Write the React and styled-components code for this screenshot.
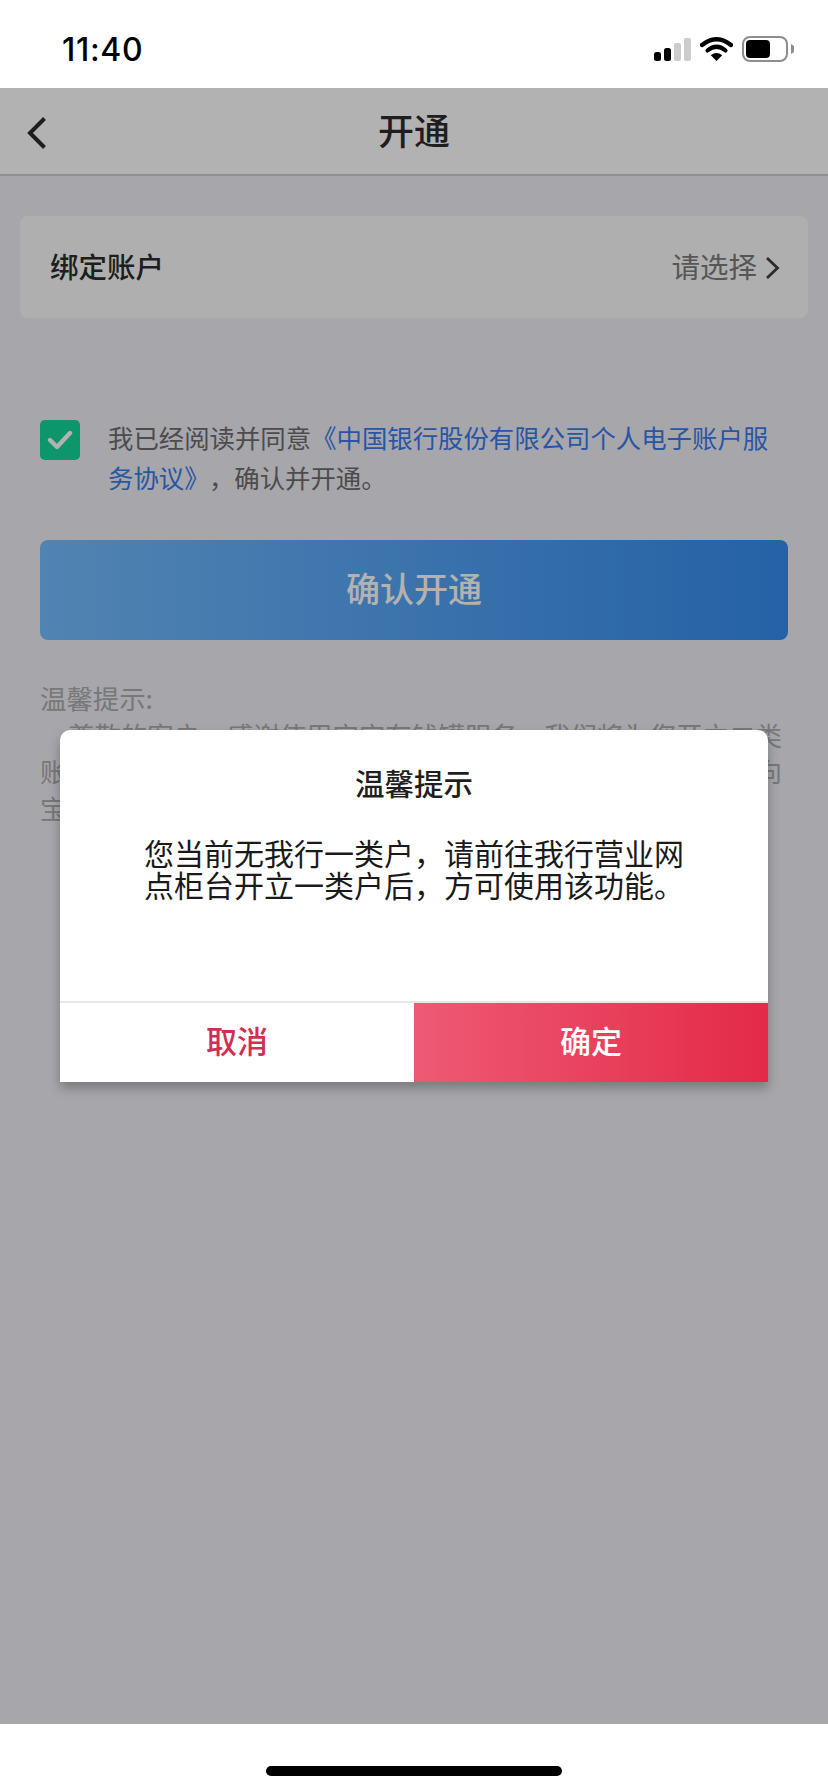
import styled, { createGlobalStyle } from 'styled-components';

const GlobalStyle = createGlobalStyle`
  html, body {
    margin: 0;
    padding: 0;
    background: #fff;
  }
  * {
    box-sizing: border-box;
  }
`;

const fontStack = `"Noto Sans CJK SC", "Noto Sans", sans-serif`;

const Page = styled.div`
  width: 828px;
  height: 1792px;
  display: flex;
  flex-direction: column;
  overflow: hidden;
  font-family: ${fontStack};
`;

const StatusBar = styled.div`
  height: 88px;
  flex: none;
  display: flex;
  align-items: center;
  justify-content: space-between;
  padding: 0 34px 0 62px;
  background: #fff;
`;

const Time = styled.div`
  font-family: Inter, Roboto, sans-serif;
  font-size: 32px;
  font-weight: 500;
  color: #000;
  letter-spacing: 0.7px;
  margin-top: 10px;
`;

const StatusIcons = styled.div`
  display: flex;
  align-items: center;
  gap: 9px;
  margin-top: 10px;
`;

const Main = styled.div`
  position: relative;
  flex: 1;
  background: #f0eef5;
`;

const NavBar = styled.div`
  height: 88px;
  display: flex;
  align-items: center;
  justify-content: center;
  padding-bottom: 4px;
  position: relative;
  background: #fff;
  border-bottom: 2px solid #cfcfcf;
`;

const BackIcon = styled.svg`
  position: absolute;
  left: 26px;
  top: 28px;
`;

const NavTitle = styled.h1`
  margin: 0;
  font-size: 36px;
  font-weight: 500;
  color: #2b2b2b;
  line-height: 1;
`;

const SelectCard = styled.div`
  height: 102px;
  margin: 40px 20px 0;
  padding: 0 28px 4px 30px;
  display: flex;
  align-items: center;
  justify-content: space-between;
  background: #fbfbfb;
  border-radius: 8px;
`;

const CardLabel = styled.span`
  font-size: 28.5px;
  font-weight: 500;
  color: #2b2b2b;
`;

const CardValue = styled.span`
  display: flex;
  align-items: center;
  gap: 8px;
  font-size: 28.5px;
  color: #7b7b7b;
`;

const CardChevron = styled.svg`
  margin-top: 5px;
`;

const AgreeRow = styled.div`
  display: flex;
  align-items: flex-start;
  gap: 28px;
  margin: 102px 40px 0;
`;

const CheckBox = styled.div`
  flex: none;
  width: 40px;
  height: 40px;
  display: flex;
  align-items: center;
  justify-content: center;
  background: #14d69a;
  border-radius: 5px;
`;

const AgreeText = styled.p`
  margin: -3px 0 0;
  font-size: 25.4px;
  line-height: 40px;
  color: #6d6d6f;
`;

const AgreeLink = styled.span`
  color: #3a7cec;
`;

const AgreeTail = styled.span`
  margin-left: 12px;
`;

const ConfirmButton = styled.button`
  display: block;
  width: 748px;
  height: 100px;
  margin: 43px 40px 0;
  padding: 0 0 5px;
  border: 0;
  border-radius: 8px;
  background: linear-gradient(90deg, #75bdff, #358cee);
  color: #fff;
  font-family: ${fontStack};
  font-size: 34px;
  font-weight: 500;
`;

const Tips = styled.div`
  margin: 40px 40px 0 40px;
  width: 742px;
  font-size: 26.4px;
  line-height: 36.6px;
  color: #a9acaf;
`;

const TipsBody = styled.p`
  margin: 0;
  text-indent: 28px;
  text-align: justify;
`;

const Backdrop = styled.div`
  position: absolute;
  inset: 0;
  display: flex;
  justify-content: center;
  align-items: flex-start;
  padding-top: 642px;
  background: rgba(0, 0, 0, 0.3);
`;

const Dialog = styled.div`
  width: 708px;
  height: 352px;
  display: flex;
  flex-direction: column;
  background: #fff;
  border-radius: 10px 10px 0 0;
  box-shadow: 0 6px 12px rgba(0, 0, 0, 0.28);
  overflow: hidden;
`;

const DialogTitle = styled.h2`
  margin: 32px 0 0;
  font-size: 29.5px;
  line-height: 40px;
  font-weight: 500;
  text-align: center;
  color: #1f1f1f;
`;

const DialogText = styled.p`
  flex: 1;
  margin: 34px 0 0;
  padding: 0 83px 0 84px;
  font-size: 30px;
  line-height: 32px;
  color: #1a1a1a;
`;

const DialogActions = styled.div`
  display: flex;
  height: 81px;
  flex: none;
  border-top: 2px solid #e8e8e8;
`;

const DialogButton = styled.button`
  flex: 1;
  border: 0;
  padding: 0 0 6px;
  font-family: ${fontStack};
  font-size: 31px;
  font-weight: 500;
  color: ${p => (p.$primary ? '#fff' : '#d02f55')};
  background: ${p => (p.$primary ? 'linear-gradient(90deg, #ee5a74, #e32a48)' : '#fff')};
`;

const HomeBar = styled.div`
  height: 68px;
  flex: none;
  display: flex;
  justify-content: center;
  padding-top: 42px;
  background: #fff;
`;

const HomeIndicator = styled.div`
  width: 296px;
  height: 10px;
  border-radius: 5px;
  background: #000;
`;

const Signal = () => (
  <svg width="37" height="23" viewBox="0 0 37 23">
    <rect x="0" y="14" width="7" height="9" rx="2.5" fill="#000" />
    <rect x="10" y="10" width="7" height="13" rx="2.5" fill="#000" />
    <rect x="20" y="5" width="7" height="18" rx="2" fill="#ccc" />
    <rect x="30" y="0" width="7" height="23" rx="2" fill="#ccc" />
  </svg>
);

const Wifi = () => (
  <svg width="33" height="24" viewBox="0 0 33 24">
    <path d="M2 8 Q16.5 -3.5 31 8" fill="none" stroke="#000" strokeWidth="4.4" strokeLinecap="round" />
    <path d="M7.5 13.5 Q16.5 6 25.5 13.5" fill="none" stroke="#000" strokeWidth="4.2" strokeLinecap="round" />
    <path d="M16.5 24 L10.8 18.2 Q16.5 13.6 22.2 18.2 Z" fill="#000" />
  </svg>
);

const Battery = () => (
  <svg width="52" height="26" viewBox="0 0 52 26">
    <rect x="1" y="1" width="44" height="24" rx="7" fill="none" stroke="#8e8e8e" strokeWidth="2" />
    <rect x="4" y="4" width="24" height="18" rx="4" fill="#000" />
    <path d="M49 8 L52 10 L52 16 L49 18 Z" fill="#8e8e8e" />
  </svg>
);

const App = () => {
  return (
    <Page>
      <GlobalStyle />
      <StatusBar>
        <Time>11:40</Time>
        <StatusIcons>
          <Signal />
          <Wifi />
          <Battery />
        </StatusIcons>
      </StatusBar>
      <Main>
        <NavBar>
          <BackIcon width="21" height="34" viewBox="0 0 21 34">
            <path d="M18.5 2.5 L4 17 L18.5 31.5" fill="none" stroke="#2b2b2b" strokeWidth="4" />
          </BackIcon>
          <NavTitle>开通</NavTitle>
        </NavBar>
        <SelectCard>
          <CardLabel>绑定账户</CardLabel>
          <CardValue>
            请选择
            <CardChevron width="15" height="24" viewBox="0 0 15 24">
              <path d="M2 2 L12.5 12 L2 22" fill="none" stroke="#3f3f3f" strokeWidth="2.8" />
            </CardChevron>
          </CardValue>
        </SelectCard>
        <AgreeRow>
          <CheckBox>
            <svg width="26" height="22" viewBox="0 0 26 22">
              <path d="M3 11 L10 18 L23 4" fill="none" stroke="#fff" strokeWidth="4.4" strokeLinecap="round" strokeLinejoin="round" />
            </svg>
          </CheckBox>
          <AgreeText>
            我已经阅读并同意<AgreeLink>《中国银行股份有限公司个人电子账户服务协议》</AgreeLink>
            <AgreeTail>，确认并开通。</AgreeTail>
          </AgreeText>
        </AgreeRow>
        <ConfirmButton>确认开通</ConfirmButton>
        <Tips>
          <div>温馨提示:</div>
          <TipsBody>
            尊敬的客户，感谢使用宝宝存钱罐服务，我们将为您开立二类账户，用于存钱罐资金的存入与支取。开通后，您可通过账户向宝宝存钱罐转入资金。
          </TipsBody>
        </Tips>
        <Backdrop>
          <Dialog>
            <DialogTitle>温馨提示</DialogTitle>
            <DialogText>您当前无我行一类户，请前往我行营业网点柜台开立一类户后，方可使用该功能。</DialogText>
            <DialogActions>
              <DialogButton>取消</DialogButton>
              <DialogButton $primary>确定</DialogButton>
            </DialogActions>
          </Dialog>
        </Backdrop>
      </Main>
      <HomeBar>
        <HomeIndicator />
      </HomeBar>
    </Page>
  );
};

export default App;
